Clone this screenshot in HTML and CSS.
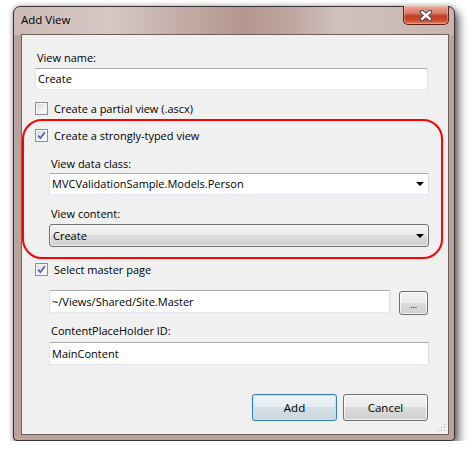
FILE: index.html
```html
<!DOCTYPE html>
<html lang="en">
<head>
  <meta charset="UTF-8">
  <meta name="viewport" content="width=device-width, initial-scale=1.0">
  <title>Add View</title>
  <link rel="stylesheet" href="styles.css">
</head>
<body>
  <div class="window">
    <div class="titlebar">
      <span class="title">Add View</span>
      <div class="close">
        <svg width="14" height="11" viewBox="0 0 14 11">
          <path d="M3 2 L11 9 M11 2 L3 9" stroke="#3b3d4f" stroke-width="4.2" stroke-linecap="round"/>
          <path d="M3 2 L11 9 M11 2 L3 9" stroke="#fff" stroke-width="2.4" stroke-linecap="round"/>
        </svg>
      </div>
    </div>

    <div class="client">
      <div class="label name-label">View name:</div>
      <div class="textbox name-box">Create</div>

      <div class="check-row partial-row">
        <span class="check"></span>
        <span>Create a partial view (.ascx)</span>
      </div>

      <!-- highlighted part -->
      <div class="group">
        <div class="check-row">
          <span class="check checked">
            <svg width="11" height="11" viewBox="0 0 11 11"><path d="M2.2 5.6 L4.4 8.2 L8.8 2.2" fill="none" stroke="#4a63a8" stroke-width="1.7"/></svg>
          </span>
          <span>Create a strongly-typed view</span>
        </div>
        <div class="label indent class-label">View data class:</div>
        <div class="textbox indent combo">
          <span>MVCValidationSample.Models.Person</span>
          <span class="arrow"></span>
        </div>
        <div class="label indent content-label">View content:</div>
        <div class="dropdown indent">
          <span>Create</span>
          <span class="arrow"></span>
        </div>
      </div>

      <div class="check-row master-check">
        <span class="check checked">
          <svg width="11" height="11" viewBox="0 0 11 11"><path d="M2.2 5.6 L4.4 8.2 L8.8 2.2" fill="none" stroke="#4a63a8" stroke-width="1.7"/></svg>
        </span>
        <span>Select master page</span>
      </div>

      <div class="master-row">
        <div class="textbox master-box">~/Views/Shared/Site.Master</div>
        <div class="btn browse">...</div>
      </div>

      <div class="label indent holder-label">ContentPlaceHolder ID:</div>
      <div class="textbox indent holder-box">MainContent</div>

      <div class="buttons">
        <div class="btn default">Add</div>
        <div class="btn cancel">Cancel</div>
      </div>

      <svg class="grip" width="8" height="8" viewBox="0 0 8 8">
        <rect x="6" y="0" width="1" height="1" fill="#a8a8a8"/>
        <rect x="3" y="3" width="1" height="1" fill="#a8a8a8"/>
        <rect x="6" y="3" width="1" height="1" fill="#a8a8a8"/>
        <rect x="0" y="6" width="1" height="1" fill="#a8a8a8"/>
        <rect x="3" y="6" width="1" height="1" fill="#a8a8a8"/>
        <rect x="6" y="6" width="1" height="1" fill="#a8a8a8"/>
      </svg>
    </div>
  </div>
</body>
</html>
```

FILE: styles.css
```css
body {
  margin: 0;
  background: #fff;
  font-family: "Segoe UI", "Open Sans", sans-serif;
  font-size: 11px;
  color: #000;
}
.window {
  box-sizing: border-box;
  width: 442px;
  height: 435px;
  margin: 6px 0 0 13px;
  padding: 0 5px 5px 7px;
  border: 1px solid #3a3230;
  border-radius: 7px 7px 4px 4px;
  background:
    linear-gradient(90deg, #cdbab6 0%, #d6c8c5 22%, #c4aca6 38%, #b4978e 52%, #c1a8a2 64%, #d0c1be 74%, #c9b5b1 100%) top / 100% 28px no-repeat,
    #bba39d;
  box-shadow: 4px 5px 10px rgba(0, 0, 0, 0.6), 0 0 5px rgba(0, 0, 0, 0.3);
  display: flex;
  flex-direction: column;
}
.titlebar {
  height: 27px;
  display: flex;
  align-items: flex-start;
}
.title {
  padding-top: 5px;
  line-height: 15px;
  font-size: 11.5px;
}
.close {
  box-sizing: border-box;
  margin: -1px 0 0 auto;
  width: 46px;
  height: 19px;
  border: 1px solid #57231b;
  border-top: none;
  border-radius: 0 0 5px 5px;
  background: linear-gradient(#e9a898 0%, #d97b67 40%, #c43d22 55%, #cc4a2a 80%, #e0815f 100%);
  box-shadow: inset 0 0 0 1px rgba(255, 230, 220, 0.35);
  display: flex;
  align-items: center;
  justify-content: center;
}
.client {
  flex: 1;
  position: relative;
  border: 1px solid #6d605d;
  background: #f0f0f0;
  padding: 0 20px 0 13px;
  display: flex;
  flex-direction: column;
}
.label {
  line-height: 15px;
  padding-left: 2px;
}
.indent {
  margin-left: 14px;
}
.textbox {
  box-sizing: border-box;
  height: 22px;
  line-height: 20px;
  padding-left: 2px;
  background: #fff;
  border: 1px solid;
  border-color: #abadb3 #dbdfe6 #e3e9ef #e2e3ea;
  white-space: nowrap;
}
.name-label { margin-top: 15px; }
.name-box { margin-top: 3px; }
.check-row {
  height: 13px;
  display: flex;
  align-items: center;
  gap: 6px;
}
.check {
  box-sizing: border-box;
  width: 13px;
  height: 13px;
  border: 1px solid #8e8f8f;
  background: linear-gradient(135deg, #d9d9d9, #f7f7f7 80%);
  box-shadow: inset 0 0 0 1px #f4f4f4;
  display: flex;
  align-items: center;
  justify-content: center;
}
.partial-row { margin-top: 12px; }
.group {
  margin: 4px -15px 0 -13px;
  padding: 8px 12px 10px 11px;
  border: 2px solid #f00;
  border-radius: 20px;
  display: flex;
  flex-direction: column;
}
.class-label { margin-top: 14px; }
.combo {
  margin-top: 2px;
  display: flex;
  align-items: center;
  padding-right: 4px;
}
.arrow {
  margin-left: auto;
  width: 0;
  height: 0;
  border-left: 4px solid transparent;
  border-right: 4px solid transparent;
  border-top: 4px solid #000;
}
.content-label { margin-top: 11px; }
.dropdown {
  box-sizing: border-box;
  margin-top: 3px;
  height: 23px;
  padding: 0 4px 0 3px;
  border: 1px solid #707070;
  border-radius: 3px;
  background: linear-gradient(#f2f2f2 0%, #ebebeb 50%, #dddddd 50%, #cfcfcf 100%);
  box-shadow: inset 0 0 0 1px rgba(255, 255, 255, 0.6);
  display: flex;
  align-items: center;
}
.master-check { margin-top: 4px; }
.master-row {
  margin-top: 14px;
  height: 25px;
  display: flex;
  align-items: flex-start;
}
.master-box {
  flex: 1;
  height: 23px;
  line-height: 21px;
  margin-left: 14px;
}
.btn {
  box-sizing: border-box;
  border: 1px solid #707070;
  border-radius: 3px;
  background: linear-gradient(#f2f2f2 0%, #ebebeb 50%, #dddddd 50%, #cfcfcf 100%);
  box-shadow: inset 0 0 0 1px rgba(255, 255, 255, 0.7);
  display: flex;
  align-items: center;
  justify-content: center;
}
.browse {
  width: 29px;
  height: 24px;
  margin: 1px 0 0 9px;
  font-size: 9px;
  padding-top: 3px;
}
.holder-label { margin-top: 8px; }
.holder-box {
  margin: 4px -1px 0 14px;
  height: 23px;
  line-height: 21px;
}
.buttons {
  margin-top: 29px;
  display: flex;
  justify-content: flex-end;
  gap: 6px;
}
.buttons .btn {
  height: 27px;
  width: 85px;
  font-size: 11.5px;
}
.default {
  border-color: #3c7fb1;
  background: linear-gradient(#edf4f8 0%, #e3ecf1 50%, #d4dfe5 50%, #cbd8df 100%);
  box-shadow: inset 0 0 0 1px #bfe4f7, 0 0 1px #48a8e0;
}
.grip {
  position: absolute;
  right: 2px;
  bottom: 2px;
}
```
